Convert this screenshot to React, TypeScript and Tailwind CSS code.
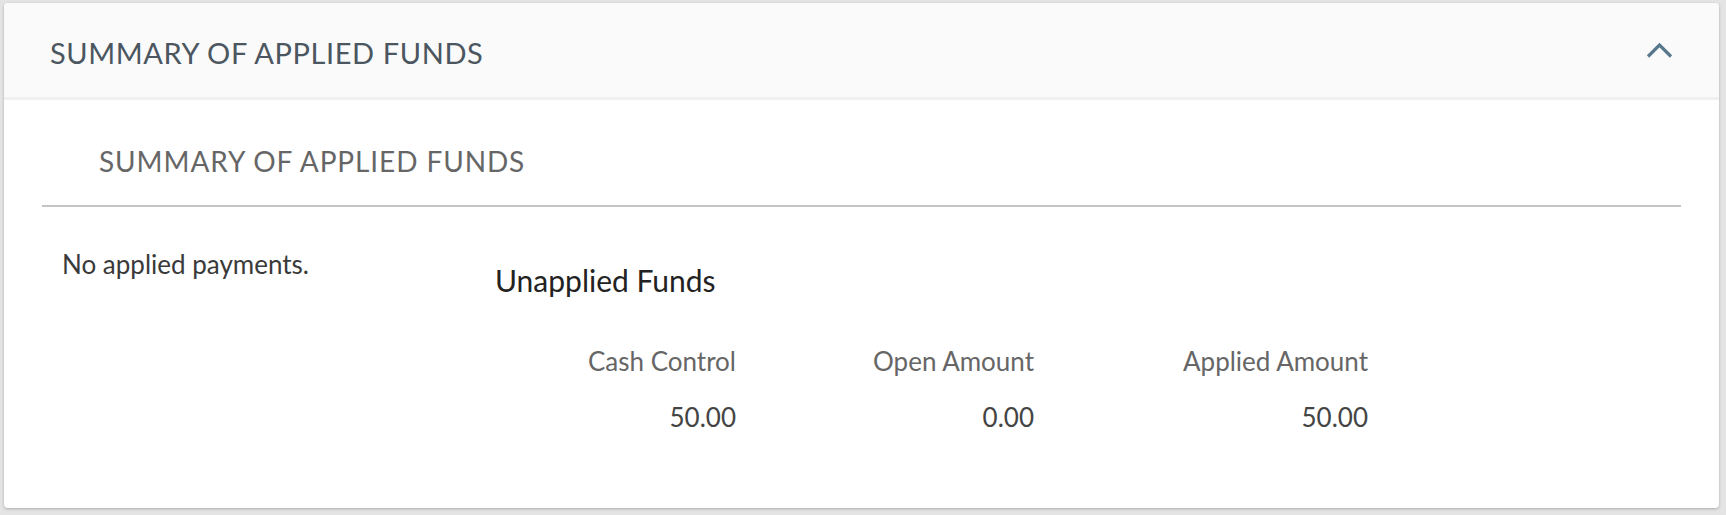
import React from 'react';

const columns = [
  { label: 'Cash Control', value: '50.00', width: 'w-[241px]' },
  { label: 'Open Amount', value: '0.00', width: 'w-[298px]' },
  { label: 'Applied Amount', value: '50.00', width: 'w-[334px]' },
];

const ChevronUpIcon: React.FC = () => (
  <svg width="27" height="18" viewBox="0 0 27 18" fill="none">
    <polyline points="2,15.5 13.5,4 25,15.5" stroke="#58798b" strokeWidth="3.2" />
  </svg>
);

const App: React.FC = () => {
  return (
    <div className="min-h-screen bg-[#e4e4e4] pl-[4px] pt-[3px] font-['Lato','Liberation_Sans',sans-serif]">
      <div className="w-[1715px] h-[505px] rounded-[4px] bg-white shadow-[0_1px_3px_rgba(0,0,0,0.25)] overflow-hidden">
        <div className="flex h-[94px] items-center justify-between bg-[#fafafa] px-[46px]">
          <h2 className="mt-[4px] text-[29px] leading-none tracking-[0.6px] text-[#4b5660]">SUMMARY OF APPLIED FUNDS</h2>
          <ChevronUpIcon />
        </div>
        <div className="h-[3px] bg-[#f0f0f0]" />

        <div className="px-[38px]">
          <div className="pl-[57px] pt-[40px] pb-[23px]">
            <h3 className="text-[28px] leading-[42px] tracking-[0.9px] text-[#666666]">SUMMARY OF APPLIED FUNDS</h3>
          </div>
          <div className="h-[2px] bg-[#c4c4c4]" />

          <div className="flex">
            <div className="w-[453px] pl-[20px] pt-[39px]">
              <p className="text-[26px] leading-[36px] text-[#3a3a3a]">No applied payments.</p>
            </div>
            <div className="pt-[53px]">
              <h4 className="text-[30px] leading-[40px] text-[#222222]">Unapplied Funds</h4>
              <div className="mt-[43px] flex">
                {columns.map(col => (
                  <div key={col.label} className={`${col.width} text-right`}>
                    <div className="text-[26px] leading-[36px] text-[#666666]">{col.label}</div>
                    <div className="mt-[20px] text-[26px] leading-[36px] text-[#444444]">{col.value}</div>
                  </div>
                ))}
              </div>
            </div>
          </div>
        </div>
      </div>
    </div>
  );
};

export default App;
